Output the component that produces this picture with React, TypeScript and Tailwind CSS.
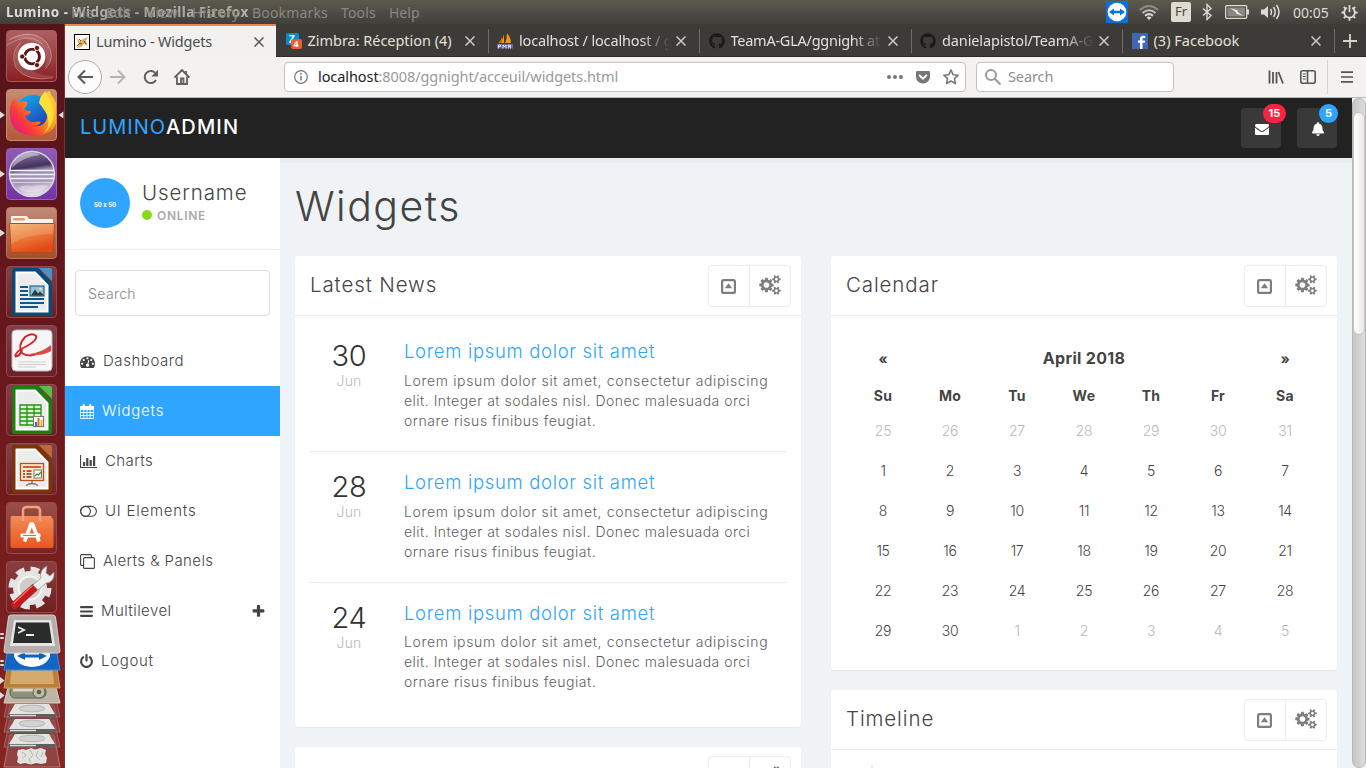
import React, { ReactNode } from "react";
import { FaBell, FaGithub, FaGetPocket } from "react-icons/fa";

const PLUS =
  "M1600 736v192q0 40-28 68t-68 28h-416v416q0 40-28 68t-68 28h-192q-40 0-68-28t-28-68v-416h-416q-40 0-68-28t-28-68v-192q0-40 28-68t68-28h416v-416q0-40 28-68t68-28h192q40 0 68 28t28 68v416h416q40 0 68 28t28 68z";
const POWER =
  "M1664 896q0 156-61 298t-164 245-245 164-298 61-298-61-245-164-164-245-61-298q0-182 80.5-343t226.5-270q43-32 95.5-25t83.5 50q32 42 24.5 94.5t-49.5 84.5q-98 74-151.5 181t-53.5 228q0 104 40.5 198.5t109.5 163.5 163.5 109.5 198.5 40.5 198.5-40.5 163.5-109.5 109.5-163.5 40.5-198.5q0-121-53.5-228t-151.5-181q-42-32-49.5-84.5t24.5-94.5q31-43 84-50t95 25q146 109 226.5 270t80.5 343zm-640-768v640q0 52-38 90t-90 38-90-38-38-90v-640q0-52 38-90t90-38 90 38 38 90z";
const ENVELOPE =
  "M1792 710v794q0 66-47 113t-113 47h-1472q-66 0-113-47t-47-113v-794q44 49 101 87 362 246 497 345 57 42 92.5 65.5t94.5 48 110 24.5h2q51 0 110-24.5t94.5-48 92.5-65.5q170-123 498-345 57-39 100-87zm0-294q0 79-49 151t-122 123q-376 261-468 325-10 7-42.5 31t-54 38.5-52 32.5-57.500 27-50 9h-2q-23 0-50-9t-57.500-27-52-32.500-54-38.500-42.500-31q-91-64-262-182.500t-205-142.500q-62-42-117-115.500t-55-136.500q0-78 41.500-130t118.500-52h1472q65 0 112.500 47t47.500 113z";
const COGS =
  "M896 896q0-106-75-181t-181-75-181 75-75 181 75 181 181 75 181-75 75-181zm768 512q0-52-38-90t-90-38-90 38-38 90q0 53 37.5 90.5t90.5 37.5 90.5-37.5 37.5-90.5zm0-1024q0-52-38-90t-90-38-90 38-38 90q0 53 37.5 90.5t90.5 37.5 90.5-37.5 37.5-90.5zm-384 421v185q0 10-7 19.5t-16 10.5l-155 24q-11 35-32 76 34 48 90 115 7 11 7 20 0 12-7 19-23 30-82.5 89.5t-78.5 59.5q-11 0-21-7l-115-90q-37 19-77 31-11 108-23 155-7 24-30 24h-186q-11 0-20-7.5t-10-17.5l-23-153q-34-10-75-31l-118 89q-7 7-20 7-11 0-21-8-144-133-144-160 0-9 7-19 10-14 41-53t47-61q-23-44-35-82l-152-24q-10-1-17-9.5t-7-19.5v-185q0-10 7-19.5t16-10.5l155-24q11-35 32-76-34-48-90-115-7-11-7-20 0-12 7-20 22-30 82-89t79-59q11 0 21 7l115 90q34-18 77-32 11-108 23-154 7-24 30-24h186q11 0 20 7.5t10 17.5l23 153q34 10 75 31l118-89q8-7 20-7 11 0 21 8 144 133 144 160 0 8-7 19-12 16-42 54t-45 60q23 48 34 82l152 23q10 2 17 10.5t7 19.5zm640 533v140q0 16-149 31-12 27-30 52 51 113 51 138 0 4-4 7-122 71-124 71-8 0-46-47t-52-68q-20 2-30 2t-30-2q-14 21-52 68t-46 47q-2 0-124-71-4-3-4-7 0-25 51-138-18-25-30-52-149-15-149-31v-140q0-16 149-31 13-29 30-52-51-113-51-138 0-4 4-7 4-2 35-20t59-34 30-16q8 0 46 46.5t52 67.5q20-2 30-2t30 2q51-71 92-112l6-2q4 0 124 70 4 3 4 7 0 25-51 138 17 23 30 52 149 15 149 31zm0-1024v140q0 16-149 31-12 27-30 52 51 113 51 138 0 4-4 7-122 71-124 71-8 0-46-47t-52-68q-20 2-30 2t-30-2q-14 21-52 68t-46 47q-2 0-124-71-4-3-4-7 0-25 51-138-18-25-30-52-149-15-149-31v-140q0-16 149-31 13-29 30-52-51-113-51-138 0-4 4-7 4-2 35-20t59-34 30-16q8 0 46 46.5t52 67.5q20-2 30-2t30 2q51-71 92-112l6-2q4 0 124 70 4 3 4 7 0 25-51 138 17 23 30 52 149 15 149 31z";
const GAUGE =
  "M384 1152q0-53-37.5-90.5t-90.5-37.5-90.5 37.5-37.5 90.5 37.5 90.5 90.5 37.5 90.5-37.5 37.5-90.5zm192-448q0-53-37.5-90.5t-90.5-37.5-90.5 37.5-37.5 90.5 37.5 90.5 90.5 37.5 90.5-37.5 37.5-90.5zm428 481l101-382q6-26-7.5-48.5t-38.5-29.5-48 6.5-30 39.5l-101 382q-60 5-107 43.5t-63 98.5q-20 77 20 146t117 89 146-20 89-117q16-60-6-117t-72-91zm660-33q0-53-37.5-90.5t-90.5-37.5-90.5 37.5-37.5 90.5 37.5 90.5 90.5 37.5 90.5-37.5 37.5-90.5zm-640-640q0-53-37.5-90.5t-90.5-37.5-90.5 37.5-37.5 90.5 37.5 90.5 90.5 37.5 90.5-37.5 37.5-90.5zm448 192q0-53-37.5-90.5t-90.5-37.5-90.5 37.5-37.5 90.5 37.5 90.5 90.5 37.5 90.5-37.5 37.5-90.5zm320 448q0 261-141 483-19 29-54 29h-1402q-35 0-54-29-141-221-141-483 0-182 71-348t191-286 286-191 348-71 348 71 286 191 191 286 71 348z";

/* ---------- desktop top bar ---------- */

function TopBar() {
  return (
    <header className="flex h-6 shrink-0 items-center justify-between bg-linear-to-b from-[#5d5a50] to-[#403f3a] font-['Noto_Sans',sans-serif] text-[14px] text-[#dfdbd2]">
      <div className="relative flex h-6 items-center">
        <span className="w-[249px] overflow-hidden pl-1.5 text-[13.500px] font-bold tracking-[0.490px] whitespace-nowrap [mask-image:linear-gradient(to_right,#000_60px,rgba(0,0,0,.6)_110px,rgba(0,0,0,.7)_248px)]">
          Lumino - Widgets - Mozilla Firefox
        </span>
        <nav className="absolute top-0 left-[71px] flex h-6 items-center whitespace-nowrap text-[#8b887f]">
          <span className="w-[35px]">File</span>
          <span className="w-[41px]">Edit</span>
          <span className="w-[45px]">View</span>
          <span className="w-[60px]">History</span>
          <span className="w-[89px] tracking-[0.170px]">Bookmarks</span>
          <span className="w-[48px] tracking-[0.170px]">Tools</span>
          <span>Help</span>
        </nav>
      </div>
      <div className="flex items-center pr-2">
        <svg className="h-[22px] w-[22px]" viewBox="0 0 22 22">
          <rect width="22" height="22" rx="1" fill="#0a70dd" />
          <circle cx="11" cy="11" r="9.3" fill="#fff" />
          <path d="M3 11l5-3.600v2.300h6V7.400l5 3.600-5 3.600v-2.300H8v2.300z" fill="#0a70dd" />
        </svg>
        <svg className="ml-[11px] h-5 w-5" viewBox="0 0 20 20" fill="none" strokeWidth="2">
          <path d="M0.800 8Q10 0 19.200 8" stroke="#8f8c84" />
          <path d="M3.500 11Q10 5.500 16.500 11" stroke="#c5c1b8" />
          <path d="M6 13.800Q10 10.500 14 13.800" stroke="#dfdbd2" />
          <path d="M7.500 15.500Q10 13.500 12.500 15.500L10 18z" fill="#dfdbd2" stroke="none" />
        </svg>
        <span className="ml-3 flex h-5 w-5 items-center justify-center rounded-[2px] bg-[#dfdbd2] text-[13px] text-[#4a4944]">
          Fr
        </span>
        <svg className="ml-2 h-[18px] w-4" viewBox="0 0 16 18" fill="none" stroke="#dfdbd2" strokeWidth="1.400">
          <path d="M4 5.500l8 7-4 4V1.500l4 4-8 7" />
        </svg>
        <svg className="ml-[10px] h-4 w-6" viewBox="0 0 24 16">
          <rect x="0.700" y="1.700" width="21" height="12.600" rx="1" fill="none" stroke="#dfdbd2" strokeWidth="1.300" />
          <rect x="2.500" y="3.500" width="17.500" height="9" fill="#8b887f" />
          <rect x="22" y="5.500" width="2" height="5" fill="#dfdbd2" />
          <path d="M5.500 4l7 2.500.3 1.500L18 12l-6.800-2.500-.5-1.500z" fill="#f3f0ea" />
        </svg>
        <svg className="ml-3 h-[18px] w-5" viewBox="0 0 20 18" fill="none" stroke="#dfdbd2" strokeWidth="1.500">
          <path d="M0 6.500h3l4-3.500v12l-4-3.500H0z" fill="#dfdbd2" stroke="none" />
          <path d="M9.500 6q2 3 0 6M12.500 4q3.400 5 0 10M15.500 2q5 7 0 14" />
        </svg>
        <span className="ml-3 w-[45px]">00:05</span>
        <svg className="ml-[3px] h-[17px] w-[17px]" viewBox="0 0 17 17" fill="none" stroke="#dfdbd2">
          <path d="M5.800 3.800A5.300 5.300 0 1 0 11.200 3.800" strokeWidth="1.800" />
          <path d="M8.500 1v7" strokeWidth="1.700" />
          <path d="M2.800 2.800l1.800 1.800M14.200 2.800l-1.800 1.800M0.500 8.500h3M16.500 8.500h-3M2.800 14.200l1.800-1.800M14.200 14.200l-1.800-1.800M8.500 16.800v-3" strokeWidth="1.800" />
        </svg>
      </div>
    </header>
  );
}

/* ---------- launcher ---------- */

function Tile({ tint, children, running, active }: { tint: string; children: ReactNode; running?: boolean; active?: boolean }) {
  return (
    <div className="flex items-center">
      <svg className="h-2.5 w-1.5" viewBox="0 0 6 10">
        {running && <path d="M0 1.500l5 3.500-5 3.500z" fill="#ddd" />}
      </svg>
      <div className={`flex h-[52px] w-[52px] items-center justify-center overflow-hidden rounded-[4px] border ${tint}`}>
        {children}
      </div>
      <svg className="h-2.5 w-[7px]" viewBox="0 0 7 10">
        {active && <path d="M6.500 1.500l-5 3.500 5 3.500z" fill="#ddd" />}
      </svg>
    </div>
  );
}

function DocIcon({ dark, light, children }: { dark: string; light: string; children: ReactNode }) {
  return (
    <svg className="h-[50px] w-[42px]" viewBox="0 0 42 50">
      <path d="M3 1h24l14 15v31q0 2-2 2H3q-2 0-2-2V3q0-2 2-2z" fill={dark} />
      <path d="M28 1h11q2 0 2 2v11z" fill={light} />
      <path d="M4.500 4.500h20L37.500 18v27.500h-33z" fill="#fff" />
      <path d="M6.500 6.500h17L35.500 19v24.500h-29z" fill="#ececec" />
      {children}
    </svg>
  );
}

function Launcher() {
  return (
    <aside className="flex w-[65px] shrink-0 flex-col gap-[7px] border-r border-[#7d3036] bg-linear-to-b from-[#55131a] via-[#6b181c] to-[#852522] pt-1.5">
      <Tile tint="border-[#a8595c] bg-linear-to-b from-[#ac5f62] to-[#8a1e21]">
        <svg className="h-[50px] w-[50px]" viewBox="0 0 50 50">
          <g fill="#fff" fillOpacity=".13">
            <path d="M0 8Q26-6 41 12 50 27 38 38 44 22 34 14 20 4 0 8z" />
            <path d="M50 45Q22 54 10 38 4 24 14 11 8 26 18 36 32 46 50 45z" />
          </g>
          <g fill="none" stroke="#f0c6c6" strokeOpacity=".45" strokeWidth="1">
            <path d="M2 9Q25-4 40 11 51 26 39 38M0 14Q22 0 36 13" />
            <path d="M47 47Q21 52 9 37 3 21 14 11" />
          </g>
          <circle cx="25" cy="25.500" r="14" fill="#fff" />
          <circle cx="25.500" cy="25.500" r="7.500" fill="none" stroke="#5d1515" strokeWidth="3" />
          <path d="M25.500 25.500H12M25.500 25.500L32.500 13.500M25.500 25.500L32.500 37.500" stroke="#fff" strokeWidth="1.300" />
          <g fill="#5d1515" stroke="#fff" strokeWidth=".8">
            <circle cx="15.500" cy="25.500" r="2.600" />
            <circle cx="30.500" cy="16.800" r="2.600" />
            <circle cx="30.500" cy="34.200" r="2.600" />
          </g>
        </svg>
      </Tile>

      <Tile running active tint="border-[#c98b70] bg-linear-to-b from-[#c58b74] to-[#b25b38]">
        <svg className="h-[48px] w-[48px]" viewBox="0 0 48 48">
          <defs>
            <linearGradient id="fx" x1="1" y1="0" x2="0" y2="0.800">
              <stop offset="0" stopColor="#ffe03b" />
              <stop offset=".45" stopColor="#ff9a1f" />
              <stop offset=".75" stopColor="#fb3c36" />
              <stop offset="1" stopColor="#e31587" />
            </linearGradient>
            <linearGradient id="fxb" x1="0" y1="0" x2="0.600" y2="1">
              <stop offset="0" stopColor="#12b6f5" />
              <stop offset="1" stopColor="#1b3fb0" />
            </linearGradient>
          </defs>
          <circle cx="25" cy="22" r="18" fill="url(#fxb)" />
          <path d="M6 7Q9 10 10 12q5-3 9-1 1 4-3 7 2 2 7 2 0 3-6 5 3 7 10 6 3-1 6 0-2 4-8 4 11 2 14-8 1-6-4-9 0-7 0-12 3-5 7-6 0 3 2 5 6 8 6 17-1 22-22 23Q3 44 2 25 1 14 6 7z" fill="url(#fx)" />
          <path d="M31 12Q32 4 38 0q0 3 2 5 6 8 6 17-1 14-10 20 7-8 3-18-3-7-8-12z" fill="#ffdf35" />
        </svg>
      </Tile>

      <Tile running tint="border-[#9463b8] bg-linear-to-b from-[#8f5cb3] to-[#7433a6]">
        <svg className="h-[48px] w-[48px]" viewBox="0 0 48 48">
          <defs>
            <linearGradient id="ec" x1="0" y1="0" x2="0.150" y2="1">
              <stop offset="0" stopColor="#b9adc6" />
              <stop offset=".2" stopColor="#6d5c86" />
              <stop offset=".4" stopColor="#43325f" />
              <stop offset=".5" stopColor="#9c8eb0" />
              <stop offset=".75" stopColor="#a79bb9" />
              <stop offset="1" stopColor="#e0dae8" />
            </linearGradient>
          </defs>
          <circle cx="24" cy="24" r="22.500" fill="url(#ec)" stroke="#d9d2e3" strokeWidth="1.500" />
          <path d="M4 18Q6 5 20 3q8-1 12 2Q14 7 4 18z" fill="#fff" fillOpacity=".4" />
          <path d="M10 38Q24 48 40 36 34 34 24 36 16 34 10 38z" fill="#fff" fillOpacity=".35" />
          <path d="M2 20.500h44M1.500 24.500h45M2 28.500h44" stroke="#f4f1f8" strokeWidth="1.600" />
          <path d="M3 32.500h42" stroke="#d8d0e2" strokeWidth="1" />
        </svg>
      </Tile>

      <Tile running tint="border-[#bb7557] bg-linear-to-b from-[#c08a78] to-[#a04f2b]">
        <svg className="h-[44px] w-[46px]" viewBox="0 0 46 44">
          <defs>
            <linearGradient id="fo" x1="0" y1="0" x2="0.400" y2="1">
              <stop offset="0" stopColor="#f2ae63" />
              <stop offset="1" stopColor="#e34a16" />
            </linearGradient>
          </defs>
          <path d="M2 9V6q0-1 1-1h14q1 0 1.500 1l1.500 2h23q1 0 1 1v6H2z" fill="#f6f3f0" />
          <rect x="4" y="7" width="12" height="2.500" rx="1" fill="#ec9a6b" />
          <path d="M0.500 12.500h45L44 40q0 1.500-2 1.500H4Q2 41.500 2 40z" fill="url(#fo)" stroke="#b54a19" />
          <path d="M1 13h44l-.5 10Q20 22 2 33z" fill="#fff" fillOpacity=".15" />
        </svg>
      </Tile>

      <Tile tint="border-[#8e4a51] bg-linear-to-b from-[#80404a] to-[#672028]">
        <DocIcon dark="#0c4a76" light="#4a93c4">
          <path d="M9 20h8M9 24h8M9 28h8M9 32h24M9 36h24M9 40h18" stroke="#0b5a8f" strokeWidth="2" />
          <rect x="19" y="19" width="14" height="10" fill="#8dc3e6" stroke="#0b4f80" />
          <path d="M20 28.500l4-6 3 4 2-2 4 4z" fill="#2d3a35" />
          <circle cx="29.500" cy="22" r="1.300" fill="#ffe36b" />
        </DocIcon>
      </Tile>

      <Tile tint="border-[#8e4a4f] bg-linear-to-b from-[#80404a] to-[#6c2026]">
        <svg className="h-[44px] w-[42px]" viewBox="0 0 42 44">
          <rect x="1" y="1" width="40" height="41" rx="4" fill="#f6f6f6" stroke="#bdbdbd" />
          <path d="M4 27.500Q5 22 15 17.500 27 11 25 7 21 3 14 8 6 17 11 24q9 7 29-6" fill="none" stroke="#d3262b" strokeWidth="1.900" />
          <path d="M4 27.500q5 0 7-7" fill="none" stroke="#d3262b" strokeWidth="2.200" />
          <path d="M18 25q12-1 22-9v6q-10 6-22 3z" fill="#dc4a4c" />
          <path d="M7 33h28M7 35.500h28M7 38h18" stroke="#cfcfcf" />
        </svg>
      </Tile>

      <Tile tint="border-[#8e4a4f] bg-linear-to-b from-[#80404a] to-[#6c2026]">
        <DocIcon dark="#1e7d0e" light="#58bd45">
          <rect x="9" y="20" width="21" height="20" fill="#dff6d9" />
          <path d="M9 20h21v20H9zM9 24h21M9 28h21M9 32h21M9 36h21M16 20v20M23 20v20" fill="none" stroke="#1f9411" strokeWidth="1.300" />
          <rect x="22.500" y="31.500" width="10" height="10" fill="#fff" stroke="#777" />
          <path d="M25 41v-4" stroke="#1a78c9" strokeWidth="2" />
          <path d="M27.500 41v-8" stroke="#e26b18" strokeWidth="2" />
          <path d="M30.500 41v-6" stroke="#f0b323" strokeWidth="2" />
        </DocIcon>
      </Tile>

      <Tile tint="border-[#8e4a4a] bg-linear-to-b from-[#80404a] to-[#702022]">
        <DocIcon dark="#7c3307" light="#bd6c35">
          <rect x="9.500" y="19.500" width="23" height="17" fill="#fbe6d6" stroke="#bd4f15" strokeWidth="1.300" />
          <path d="M12 23h18" stroke="#d9611f" strokeWidth="2" />
          <path d="M12 27h2M12 30h2M12 33h2M15.500 27h5M15.500 30h5M15.500 33h5" stroke="#84330c" strokeWidth="1.500" />
          <rect x="23" y="26" width="7.500" height="8" fill="#fff" stroke="#777" />
          <path d="M24 32l2-2 1.500 1 2.500-3" fill="none" stroke="#2d9a22" strokeWidth="1.300" />
          <path d="M21 37v3M15 41.500q6-4 12 0" fill="none" stroke="#777" strokeWidth="1.500" />
        </DocIcon>
      </Tile>

      <Tile tint="border-[#984a45] bg-linear-to-b from-[#9a4f48] to-[#7c2321]">
        <svg className="h-[48px] w-[46px]" viewBox="0 0 46 48">
          <defs>
            <linearGradient id="bag" x1="0" y1="0" x2="0" y2="1">
              <stop offset="0" stopColor="#f28b58" />
              <stop offset="1" stopColor="#e8581d" />
            </linearGradient>
          </defs>
          <path d="M2 12h40l2.500 4v26q0 2-2 2h-39q-2 0-2-2V16z" fill="url(#bag)" />
          <path d="M14 17V7q0-4 4-4h9q4 0 4 4v10" fill="none" stroke="#f3a080" strokeWidth="2.500" />
          <path d="M15.500 37.500L22 20h1.500L30 37.500" fill="none" stroke="#fff" strokeWidth="3.600" strokeLinejoin="round" />
          <rect x="11.500" y="29.500" width="20" height="4" rx="1" fill="#fff" />
          <path d="M14 31.500h13" stroke="#ec6a30" />
        </svg>
      </Tile>

      <Tile tint="border-[#984a4a] bg-linear-to-b from-[#8a3f3f] to-[#6f1f20]">
        <svg className="h-[48px] w-[48px]" viewBox="0 0 48 48">
          <circle cx="22" cy="25" r="17" fill="#e4e4e2" />
          <circle cx="22" cy="25" r="18.500" fill="none" stroke="#e4e4e2" strokeWidth="6" strokeDasharray="8.500 6.030" />
          <circle cx="22" cy="25" r="11.500" fill="#cdcdca" stroke="#f5f5f5" strokeWidth="2" />
          <path d="M7 42l19-17" stroke="#c31b1f" strokeWidth="8" strokeLinecap="round" />
          <path d="M6 40l18-17" stroke="#ee6a67" strokeWidth="1.500" strokeLinecap="round" />
          <path d="M25 22l8-7q-2-8 6-12l-1 7 4 3 4-4q1 10-8 11l-8 7z" fill="#eeeeec" stroke="#999" strokeWidth=".8" />
        </svg>
      </Tile>

      <svg className="-mt-[7px] h-[155px] w-[64px] shrink-0" viewBox="0 613 64 155">
        <g fill="#ddd">
          <rect y="633" width="4" height="2" rx="1" /><rect y="637" width="4" height="2" rx="1" />
          <rect y="660" width="4" height="2" rx="1" /><rect y="664" width="4" height="2" rx="1" />
          <path d="M0 677l4.500 3.500-4.500 3.500zM0 692l4.500 3.500-4.500 3.500z" />
        </g>
        <path d="M10 735h44l6 32H4z" fill="#96504e" fillOpacity=".7" stroke="#b57774" />
        <path d="M18 750l5-1 3 1 5-2 4 1.500 6-1.500 5 2-1 4 2 4-1 5-5 1-5-1-5 1.500-6-1.500-5 1-3-2 1-4-1-4z" fill="#e2e2e0" />
        <path d="M22 752l4 3-3 3M30 750l3 5-4 4 2 4M38 751l-2 5 4 4M43 752l-2 5" fill="none" stroke="#a9a9a6" strokeWidth=".8" />
        <path d="M10 720h44l6 27H4z" fill="#96504e" fillOpacity=".55" stroke="#a8635f" />
        <path d="M10 705h44l6 27H4z" fill="#96504e" fillOpacity=".55" stroke="#a8635f" />
        <path d="M10 690h44l6 27H4z" fill="#96504e" fillOpacity=".55" stroke="#a8635f" />
        {[704, 719, 734].map((y) => (
          <g key={y}>
            <path d={`M15 ${y}h34l6 10H9z`} fill="#e3e3e2" />
            <ellipse cx="32" cy={y + 4.500} rx="13" ry="3.300" fill="#d2d2d0" stroke="#a6a6a3" strokeWidth=".7" />
            <path d={`M9 ${y + 10}h46v4H9z`} fill="#5f5f5e" />
            <path d={`M10 ${y + 11.500}h26`} stroke="#d9d9d9" strokeWidth="1.500" />
          </g>
        ))}
        <path d="M10 680h44l6 23H4z" fill="#bdb6a8" stroke="#d6d0c4" />
        <rect x="10" y="686" width="36" height="12" rx="5" fill="#8d917b" stroke="#62654f" />
        <path d="M13 690h22" stroke="#d6d9c8" strokeWidth="3" />
        <circle cx="39" cy="692" r="6" fill="#b9bcab" stroke="#62654f" />
        <circle cx="39" cy="692" r="2.300" fill="#5c5e50" />
        <path d="M8 662h48l4 26H4z" fill="#b8803a" stroke="#d39e55" />
        <path d="M12 664h40l2 20H10z" fill="#d4ab6c" />
        <path d="M9 643h46l5 27H4z" fill="#1265c4" stroke="#3c88dc" />
        <path d="M14 650h36v6q-3 10-18 11-15-1-18-11z" fill="#fff" />
        <path d="M17 656l8-4v2.500h14V652l8 4-8 4v-2.500H25v2.500z" fill="#0d62c5" />
        <path d="M11 615h42q2 0 2.500 2L60 651q0 2-2 2H6q-2 0-2-2l4.500-34q0-2 2.500-2z" fill="#b5adab" stroke="#d4cfce" />
        <path d="M14 620h37l4 26H10z" fill="#e6e6e4" />
        <path d="M16 622.500h33l3 20.500H13z" fill="#2a2c2b" />
        <path d="M18 627l6 3-6 3M26 635h8" fill="none" stroke="#eee" strokeWidth="1.800" />
      </svg>
    </aside>
  );
}

/* ---------- browser chrome ---------- */

function CloseX({ color }: { color: string }) {
  return (
    <svg className="h-[10px] w-[10px] shrink-0" viewBox="0 0 10 10" stroke={color} strokeWidth="1.500">
      <path d="M0.500 0.500l9 9M9.500 0.500l-9 9" />
    </svg>
  );
}

function Tab({ icon, label, track, fade, sep }: { icon: ReactNode; label: string; track: string; fade?: boolean; sep?: boolean }) {
  return (
    <div className="flex h-[33px] w-[211.500px] items-center pr-[13px]">
      <span className={`h-6 w-px ${sep ? "bg-[#6f6d66]" : "bg-transparent"}`} />
      <span className="ml-[8.500px] flex w-4 shrink-0 justify-center">{icon}</span>
      <span
        className={`ml-1.5 w-[152px] shrink-0 overflow-hidden text-[14.500px] whitespace-nowrap text-[#e3e0d9] ${track} ${fade ? "[mask-image:linear-gradient(to_right,#000_122px,transparent_152px)]" : ""}`}
      >
        {label}
      </span>
      <span className="ml-auto flex"><CloseX color="#cfcbc2" /></span>
    </div>
  );
}

function TabBar() {
  return (
    <div className="flex h-[33px] bg-[#3c3b37] shadow-[inset_0_-1px_0_#2b2a27]">
      <div className="flex w-[211px] shrink-0 items-center border-t-2 border-[#f08552] bg-[#f2f1f0] pr-[12px] pl-[9px]">
        <svg className="h-4 w-4" viewBox="0 0 16 16">
          <rect x=".5" y=".5" width="15" height="15" fill="#fff" stroke="#000" />
          <path d="M2 4l4 3 3-2 5-2-2 4 2 5-4-2-3 3-4 1 2-4z" fill="#dcb265" />
          <path d="M3 12l3-3 2 1M5 5l2 2M10 7l2 3" stroke="#54422c" strokeWidth=".9" fill="none" />
        </svg>
        <span className="ml-1.5 text-[14.500px] tracking-[-0.200px] text-[#4c4c4c]">Lumino - Widgets</span>
        <span className="ml-auto flex"><CloseX color="#555" /></span>
      </div>
      <Tab
        label="Zimbra: Réception (4)"
        track="tracking-[-0.030px]"
        icon={
          <span className="relative block h-4 w-4">
            <span className="flex h-3 w-[13px] items-center justify-center rounded-[2px] bg-[#0a8bcb] text-[10px] leading-none font-bold text-white">Z</span>
            <span className="absolute top-1.5 left-[5px] flex h-[10px] w-[11px] items-center justify-center rounded-[2px] bg-[#f15a29] text-[9px] leading-none font-bold text-white">4</span>
          </span>
        }
      />
      <Tab
        sep
        fade
        label="localhost / localhost / g"
        track="tracking-[-0.150px]"
        icon={
          <svg className="h-4 w-4" viewBox="0 0 16 16">
            <path d="M7 1v9H2q4-3 5-9zM10 0q4 5 4 10H8q2-4 2-10z" fill="#f7941d" />
            <path d="M5 3v7H1q3-2 4-7z" fill="#c96b0b" />
            <path d="M0 11h16v4.500H0z" fill="#6b6a9c" />
            <path d="M1.500 15.500v-3.500h2v1.500h-2M6 15.500v-3.500l1.500 2L9 12v3.500M11.500 15.500v-3.500h2v3.500M11.500 13.500h2" stroke="#e5e4f0" strokeWidth=".9" fill="none" />
          </svg>
        }
      />
      <Tab sep fade label="TeamA-GLA/ggnight at" track="tracking-[-0.250px]" icon={<FaGithub className="h-4 w-4 text-[#1b1a19]" />} />
      <Tab sep fade label="danielapistol/TeamA-G" track="tracking-[-0.120px]" icon={<FaGithub className="h-4 w-4 text-[#1b1a19]" />} />
      <Tab
        sep
        label="(3) Facebook"
        track="tracking-[0px]"
        icon={
          <svg className="h-4 w-4" viewBox="0 0 16 16">
            <rect width="16" height="16" fill="#4267b2" />
            <path d="M10.500 16V9.800h2.300l.3-2.300h-2.600V6.200q0-1.200 1.200-1.200h1.500V2.900q-5.200-.8-5.200 2.900v1.700H6v2.300h2V16z" fill="#fff" />
          </svg>
        }
      />
      <div className="flex items-center gap-2">
        <span className="h-6 w-px bg-[#6f6d66]" />
        <svg className="h-3.5 w-3.5" viewBox="0 0 14 14" stroke="#d8d4cb" strokeWidth="1.800">
          <path d="M7 0v14M0 7h14" />
        </svg>
      </div>
    </div>
  );
}

function NavBar() {
  return (
    <div className="flex h-[41px] items-center border-b border-[#bcb9b6] bg-[#f3f2f1] text-[14.500px]">
      <span className="ml-[3px] flex h-[34px] w-[34px] items-center justify-center rounded-full border border-[#ababab] bg-[#fcfcfc]">
        <svg className="h-4 w-4" viewBox="0 0 16 16" fill="none" stroke="#5a5a5a" strokeWidth="2">
          <path d="M16 8H1.500M8 1.500L1.500 8 8 14.500" />
        </svg>
      </span>
      <svg className="ml-2 h-4 w-4" viewBox="0 0 16 16" fill="none" stroke="#b6b5b4" strokeWidth="2">
        <path d="M0 8h14.500M8 1.500L14.500 8 8 14.500" />
      </svg>
      <svg className="ml-[17px] h-4 w-4" viewBox="0 0 16 16" fill="none" stroke="#5f5f5f" strokeWidth="2">
        <path d="M13 11A6 6 0 1 1 12 3.800" />
        <path d="M15 0.800v6.700H8.300z" fill="#5f5f5f" stroke="none" />
      </svg>
      <svg className="ml-[15px] h-4 w-4" viewBox="0 0 16 16" fill="none" stroke="#5f5f5f" strokeWidth="1.800">
        <path d="M0.500 8.500L8 1l7.500 7.500" />
        <path d="M3 7.500V15h10V7.500" />
        <path d="M7 15V9.500h2.500V15" />
        <path d="M12 2v3" />
      </svg>
      <div className="ml-[94px] flex h-[30px] w-[682px] items-center rounded-[4px] border border-[#c4c1be] bg-white pr-[6px] pl-[9px]">
        <svg className="h-3.5 w-3.5" viewBox="0 0 14 14" fill="none" stroke="#777" strokeWidth="1.200">
          <circle cx="7" cy="7" r="6.300" />
          <path d="M7 6v4.500M7 3v1.700" strokeWidth="1.500" />
        </svg>
        <span className="ml-[10px] tracking-[-0.080px] text-[#999]">
          <span className="text-[#222]">localhost</span>:8008/ggnight/acceuil/widgets.html
        </span>
        <svg className="mr-[12px] ml-auto h-4 w-4" viewBox="0 0 16 16" fill="#777">
          <circle cx="2" cy="8" r="2" /><circle cx="8" cy="8" r="2" /><circle cx="14" cy="8" r="2" />
        </svg>
        <FaGetPocket className="h-4 w-4 text-[#777]" />
        <svg className="ml-3 h-4 w-4" viewBox="0 0 16 16" fill="none" stroke="#777" strokeWidth="1.600" strokeLinejoin="round">
          <path d="M8 1l2.100 4.700 5.100.5-3.800 3.400 1.100 5L8 12l-4.500 2.600 1.100-5L0.800 6.200l5.100-.5z" />
        </svg>
      </div>
      <div className="ml-[10px] flex h-[30px] w-[198px] items-center rounded-[4px] border border-[#c4c1be] bg-white pl-2">
        <svg className="h-4 w-4" viewBox="0 0 16 16" fill="none" stroke="#999" strokeWidth="2">
          <circle cx="6" cy="6" r="5" />
          <path d="M9.800 9.800l5.700 5.700" />
        </svg>
        <span className="ml-[7px] tracking-[-0.100px] text-[#8e8e8e]">Search</span>
      </div>
      <svg className="ml-[94px] h-4 w-4" viewBox="0 0 16 16" stroke="#555" strokeWidth="1.800">
        <path d="M1.500 1.500v13M5 3v11.500M8.500 3v11.500M10.500 3l4.500 11.500" />
      </svg>
      <svg className="ml-4 h-4 w-4" viewBox="0 0 16 16" fill="none" stroke="#555" strokeWidth="1.600">
        <rect x="0.800" y="1.800" width="14.400" height="12.400" rx="2" />
        <path d="M7.500 2v12" />
        <path d="M2.800 5h3M2.800 7.500h3M2.800 10h3" strokeWidth="1" />
      </svg>
      <span className="ml-[11px] h-[34px] w-px bg-[#d5d3d1]" />
      <svg className="ml-[13px] h-3 w-3" viewBox="0 0 12 12" stroke="#555" strokeWidth="1.700">
        <path d="M0 1.200h12M0 6h12M0 10.800h12" />
      </svg>
    </div>
  );
}

/* ---------- Lumino page ---------- */

function Header() {
  return (
    <div className="flex h-[60px] shrink-0 items-center justify-between bg-[#222] pr-[15px] pl-[15px]">
      <div className="pb-[3px] text-[20px] leading-7">
        <span className="tracking-[1px] text-[#30a5ff]">LUMINO</span>
        <span className="font-[450] tracking-[1.150px] text-white">ADMIN</span>
      </div>
      <div className="flex gap-4">
        <div className="relative flex h-10 w-10 items-center justify-center rounded-[4px] bg-[#393939] pt-0.5 pl-0.5 text-white">
          <svg className="h-3.5 w-3.5" viewBox="0 0 1792 1792" fill="currentColor"><path d={ENVELOPE} /></svg>
          <span className="absolute -top-1 left-[22px] flex h-[19px] w-[23px] items-center justify-center rounded-full bg-[#f9243f] text-[11px] font-bold">15</span>
        </div>
        <div className="relative flex h-10 w-10 items-center justify-center rounded-[4px] bg-[#393939] pt-0.5 pl-0.5 text-white">
          <FaBell className="h-3.5 w-3.5" />
          <span className="absolute -top-1 left-[22px] flex h-[19px] w-[19px] items-center justify-center rounded-full bg-[#30a5ff] text-[11px] font-bold">5</span>
        </div>
      </div>
    </div>
  );
}

const fill1792 = (d: string, box: string, cls: string) => (
  <svg className={cls} viewBox={box} fill="currentColor"><path d={d} /></svg>
);

const menu: { label: string; track: string; icon: ReactNode; active?: boolean; plus?: boolean }[] = [
  { label: "Dashboard", track: "tracking-[0.560px]", icon: fill1792(GAUGE, "0 0 1792 1792", "h-[15px] w-[15px]") },
  {
    label: "Widgets",
    track: "tracking-[0.760px]",
    active: true,
    icon: (
      <svg className="h-[15px] w-[14px]" viewBox="0 0 14 15" fill="none" stroke="currentColor">
        <path d="M.5 2.500h13v12H.5zM0 5.500h14M0 8.500h14M0 11.500h14M3.800 5v10M7 5v10M10.200 5v10" strokeWidth=".8" />
        <path d="M.5 2.500h13v2.300H.5z" fill="currentColor" />
        <path d="M3.800 0.300v3.200M10.200 0.300v3.200" strokeWidth="2" />
      </svg>
    ),
  },
  {
    label: "Charts",
    track: "tracking-[0.420px]",
    icon: (
      <svg className="h-[15px] w-[17px]" viewBox="0 0 17 15" fill="currentColor">
        <path d="M0 1h1.100v11.900H17V14H0zM3 8h2.200v4H3zM6.200 4h2.200v8H6.200zM9.600 6h2.200v6H9.600zM13 2h2.200v10H13z" />
      </svg>
    ),
  },
  {
    label: "UI Elements",
    track: "tracking-[0.770px]",
    icon: (
      <svg className="h-[15px] w-[17px]" viewBox="0 0 17 15" fill="none" stroke="currentColor" strokeWidth="1.100">
        <rect x=".6" y="2.400" width="15.800" height="9.800" rx="4.900" />
        <circle cx="5.500" cy="7.300" r="4.900" />
      </svg>
    ),
  },
  {
    label: "Alerts & Panels",
    track: "tracking-[0.420px]",
    icon: (
      <svg className="h-[15px] w-[15px]" viewBox="0 0 15 15" fill="none" stroke="currentColor" strokeWidth="1.100">
        <rect x="3.600" y="3.600" width="10.800" height="10.800" rx="1" />
        <path d="M3.500 11.400H1.600q-1 0-1-1V1.600q0-1 1-1h8.800q1 0 1 1v1.900" />
      </svg>
    ),
  },
  {
    label: "Multilevel",
    track: "tracking-[0.420px]",
    plus: true,
    icon: (
      <svg className="h-[15px] w-[13px]" viewBox="0 0 13 15" stroke="currentColor" strokeWidth="2.200" strokeLinecap="round">
        <path d="M1.100 3.200h10.800M1.100 7.500h10.800M1.100 11.800h10.800" />
      </svg>
    ),
  },
  { label: "Logout", track: "tracking-[0.660px]", icon: fill1792(POWER, "128 0 1536 1792", "h-[15px] w-[13px]") },
];

function Sidebar() {
  return (
    <div className="w-[215px] shrink-0 bg-white text-[#444]">
      <div className="flex h-[92px] border-b border-[#e9ecf2] pt-5 pl-[15px]">
        <div className="flex h-[50px] w-[50px] items-center justify-center rounded-full bg-[#30a5ff] pt-0.5 text-[6px] font-bold whitespace-pre text-white [font-feature-settings:'calt'_0]">50 x 50</div>
        <div className="ml-3">
          <div className="pt-px text-[20.500px] leading-[27px] font-light tracking-[0.900px]">Username</div>
          <div className="mt-px flex items-center text-[12px] leading-[17px] font-semibold tracking-[0.700px] text-[#aaa]">
            <span className="mr-[5px] mb-px h-[10px] w-[10px] rounded-full bg-[#8ad919]" />
            ONLINE
          </div>
        </div>
      </div>
      <div className="px-[10px] pt-5">
        <div className="flex h-[46px] items-center rounded-[4px] border border-[#dcdcdc] pl-3 text-[14px] font-light tracking-[0.390px] text-[#888]">
          Search
        </div>
      </div>
      <ul className="mt-5">
        {menu.map((m) => (
          <li
            key={m.label}
            className={`flex h-[50px] items-center gap-2 px-[15px] text-[15px] font-[350] ${m.active ? "bg-[#30a5ff] text-white" : ""}`}
          >
            {m.icon}
            <span className={m.track}>{m.label}</span>
            {m.plus && fill1792(PLUS, "128 0 1536 1792", "ml-auto h-[15px] w-[13px]")}
          </li>
        ))}
      </ul>
    </div>
  );
}

function Panel({ title, children, className }: { title: string; children?: ReactNode; className: string }) {
  return (
    <section className={`shrink-0 rounded-[4px] bg-white shadow-[0_1px_1px_rgba(0,0,0,.05)] ${className}`}>
      <div className="flex h-[60px] items-start justify-between border-b border-[#e9ecf2] pr-[10px] pl-[15px]">
        <h2 className="pt-[15px] text-[20.500px] leading-7 font-light tracking-[0.880px] text-[#444]">{title}</h2>
        <div className="mt-[9px] flex h-[42px] w-[83px] divide-x divide-[#e9ecf2] rounded-[4px] border border-[#e9ecf2] text-[#7e7e7c]">
          <span className="flex w-[41px] items-center justify-center pr-0.5">
            <svg className="h-[15px] w-[15px]" viewBox="0 0 15 15" fill="none" stroke="currentColor" strokeWidth="2.200">
              <rect x="1.100" y="1.100" width="12.800" height="12.800" rx="1.500" />
              <path d="M7.500 4.300l3.700 4.900H3.800z" fill="currentColor" stroke="none" />
            </svg>
          </span>
          <span className="flex flex-1 items-center justify-center pb-0.5">
            <svg className="h-5 w-[22px]" viewBox="0 0 1920 1792" fill="currentColor"><path d={COGS} /></svg>
          </span>
        </div>
      </div>
      {children}
    </section>
  );
}

function News() {
  return (
    <div className="px-[15px] pt-[5px]">
      {["30", "28", "24"].map((d) => (
        <article key={d} className="flex h-[131px] border-b border-[#e9ecf2] last:border-transparent last:[&_p]:mt-[7px]">
          <div className="w-[78px] pt-5 text-center">
            <div className="text-[29px] leading-[30px] font-light tracking-[-0.250px] text-[#333]">{d}</div>
            <div className="text-[14px] leading-5 font-light tracking-[0.190px] text-[#b9bcc2]">Jun</div>
          </div>
          <div className="pt-[18px] pl-4 whitespace-nowrap">
            <h3 className="text-[18.500px] leading-6 font-light tracking-[0.680px] text-[#30a5ff]">Lorem ipsum dolor sit amet</h3>
            <p className="mt-2 text-[14px] leading-5 font-light text-[#5f5f5f]">
              <span className="tracking-[0.650px]">Lorem ipsum dolor sit amet, consectetur adipiscing</span>
              <br />
              <span className="tracking-[0.490px]">elit. Integer at sodales nisl. Donec malesuada orci</span>
              <br />
              <span className="tracking-[0.520px]">ornare risus finibus feugiat.</span>
            </p>
          </div>
        </article>
      ))}
    </div>
  );
}

const days = [25, 26, 27, 28, 29, 30, 31, ...Array.from({ length: 30 }, (_, i) => i + 1), 1, 2, 3, 4, 5];

function Calendar() {
  return (
    <div className="px-[18.500px] pt-[17px] text-center text-[14px] text-[#444]">
      <div className="grid h-12 grid-cols-7 items-center font-bold">
        <span className="pt-0.5">«</span>
        <span className="col-span-5 pt-px text-[16px] tracking-[0.300px]">April 2018</span>
        <span className="pt-0.5">»</span>
      </div>
      <div className="grid h-[29px] grid-cols-7 items-center text-[14px] font-bold tracking-[0.300px]">
        {["Su", "Mo", "Tu", "We", "Th", "Fr", "Sa"].map((d) => <span key={d}>{d}</span>)}
      </div>
      <div className="grid grid-cols-7">
        {days.map((d, i) => (
          <span key={i} className={`flex h-10 items-center justify-center tracking-[-0.300px] ${i < 7 || i > 36 ? "font-light text-[#b5b8bd]" : "font-[350]"}`}>
            {d}
          </span>
        ))}
      </div>
    </div>
  );
}

function Page() {
  return (
    <div className="flex min-h-0 flex-1 font-[Inter,sans-serif]">
      <div className="flex min-w-0 flex-1 flex-col">
        <Header />
        <div className="flex min-h-0 flex-1">
          <Sidebar />
          <main className="min-w-0 flex-1 overflow-hidden border-t-[5px] border-[#e9ecf2] bg-[#f0f3f6] px-[15px]">
            <h1 className="pt-[21px] text-[41px] leading-[44px] font-light tracking-[1.500px] text-[#444]">Widgets</h1>
            <div className="mt-7 flex gap-[30px]">
              <div className="flex w-[506px] flex-col gap-5">
                <Panel title="Latest News" className="h-[471px]"><News /></Panel>
                <Panel title="" className="h-[300px]" />
              </div>
              <div className="flex w-[506px] flex-col gap-5">
                <Panel title="Calendar" className="h-[414px]"><Calendar /></Panel>
                <Panel title="Timeline" className="h-[300px]">
                  <div className="mt-[15px] ml-10 h-[200px] w-0.5 bg-[#e9ecf2]" />
                </Panel>
              </div>
            </div>
          </main>
        </div>
      </div>
      <div className="w-[14px] shrink-0 rounded-[7px] border border-[#b9b7b4] bg-linear-to-r from-[#c6c6c6] to-[#dedede] pt-[13px]">
        <div className="h-[223px] rounded-full border border-[#c9c6c2] bg-linear-to-r from-white to-[#e9e8e6]" />
      </div>
    </div>
  );
}

export default function App() {
  return (
    <div className="flex h-[768px] w-[1366px] flex-col overflow-hidden bg-[#f2f1f0]">
      <TopBar />
      <div className="flex min-h-0 flex-1">
        <Launcher />
        <div className="flex min-w-0 flex-1 flex-col font-['Noto_Sans',sans-serif]">
          <TabBar />
          <NavBar />
          <Page />
        </div>
      </div>
    </div>
  );
}
